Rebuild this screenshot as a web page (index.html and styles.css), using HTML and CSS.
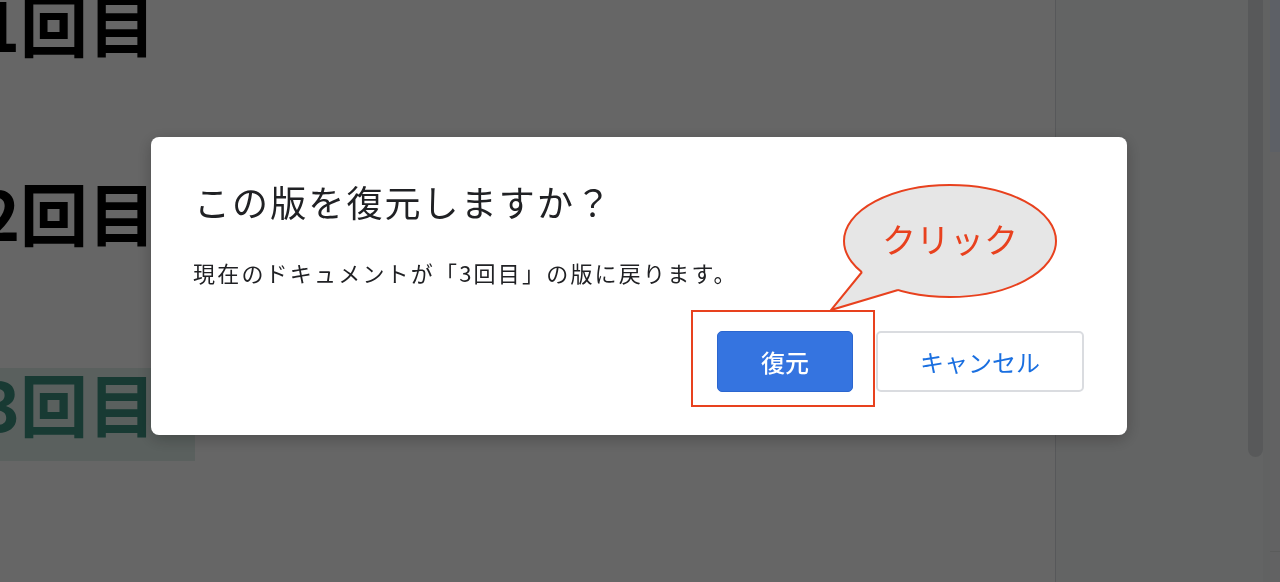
FILE: index.html
```html
<!DOCTYPE html>
<html lang="ja">
<head>
<meta charset="utf-8">
<title>版を復元</title>
<link rel="stylesheet" href="styles.css">
</head>
<body>
<div class="app">
  <main class="doc">
    <h1 class="heading first">1回目</h1>
    <h1 class="heading second">2回目</h1>
    <h1 class="heading third"><span class="hl">3回目</span></h1>
  </main>
  <aside class="side">
    <div class="panel"></div>
    <div class="scroll"><div class="thumb"></div></div>
    <div class="gutter"></div>
    <div class="strip"><div class="strip-top"></div><div class="strip-mid"></div><div class="strip-bot"></div></div>
  </aside>
</div>
<div class="backdrop">
  <div class="dialog">
    <h2 class="title">この版を復元しますか？</h2>
    <p class="body">現在のドキュメントが「3回目」の版に戻ります。</p>
    <div class="actions">
      <button class="btn primary">復元</button>
      <button class="btn secondary">キャンセル</button>
    </div>
    <div class="callout-box"></div>
    <svg class="bubble" width="245" height="135" viewBox="0 0 245 135">
      <ellipse cx="130" cy="61" rx="106" ry="56" fill="#e6e6e6" stroke="#e8411e" stroke-width="2"/>
      <polygon points="42,92 11,130 78,110 80,100 46,86" fill="#e6e6e6"/>
      <polyline points="42,92 11,130 78,110" fill="none" stroke="#e8411e" stroke-width="2" stroke-linejoin="miter"/>
      <text x="130" y="73" text-anchor="middle" class="bubble-text">クリック</text>
    </svg>
  </div>
</div>
</body>
</html>
```
FILE: styles.css
```css
html, body {
  margin: 0;
  padding: 0;
  width: 1280px;
  height: 582px;
  overflow: hidden;
  font-family: "Noto Sans CJK JP", "Noto Sans", sans-serif;
}

.app {
  display: flex;
  width: 1280px;
  height: 582px;
}

.doc {
  flex: 0 0 1055px;
  background: #ffffff;
  border-right: 1px solid #dadce0;
  display: flex;
  flex-direction: column;
  align-items: flex-start;
  overflow: hidden;
}

.heading {
  margin: 0 0 0 -20px;
  font-size: 68px;
  line-height: 68px;
  font-weight: 700;
  color: #000000;
  white-space: nowrap;
}

.heading.first { margin-top: -11px; }
.heading.second { margin-top: 121px; }
.heading.third { margin-top: 122px; }

.hl {
  display: inline-block;
  background: #e1f0eb;
  color: #3d9180;
  padding: 1px 39px 24px 0;
  line-height: 68px;
}

.side {
  flex: 1;
  display: flex;
  background: #f8f9fa;
}

.panel { flex: 1; }

.scroll {
  flex: 0 0 15px;
}

.thumb {
  height: 457px;
  background: #dcdfe1;
  border-radius: 0 0 8px 8px;
}

.gutter {
  flex: 0 0 7px;
  background: #f3f4f5;
}

.strip {
  flex: 0 0 10px;
  display: flex;
  flex-direction: column;
}

.strip-top {
  height: 152px;
  background: #e8f0fe;
}

.strip-mid {
  flex: 1;
  background: #f5f6f7;
}

.strip-bot {
  height: 30px;
  background: #f5f6f7;
  border-top: 1px solid #e3e5e7;
}

.backdrop {
  position: fixed;
  inset: 0;
  background: rgba(0, 0, 0, 0.6);
  display: flex;
  justify-content: center;
  align-items: flex-start;
  padding: 137px 2px 0 0;
  box-sizing: border-box;
}

.dialog {
  position: relative;
  width: 976px;
  height: 298px;
  box-sizing: border-box;
  background: #ffffff;
  border-radius: 8px;
  box-shadow: 0 4px 16px rgba(0, 0, 0, 0.25);
  padding: 40px 43px 43px 43px;
  display: flex;
  flex-direction: column;
}

.title {
  margin: 0;
  font-size: 36px;
  line-height: 48px;
  font-weight: 400;
  letter-spacing: 2.1px;
  color: #202124;
}

.body {
  margin: 33px 0 0 -1px;
  font-size: 22px;
  line-height: 28px;
  letter-spacing: 2.2px;
  color: #202124;
}

.actions {
  margin-top: auto;
  display: flex;
  justify-content: flex-end;
  gap: 23px;
}

.btn {
  height: 61px;
  box-sizing: border-box;
  border-radius: 5px;
  font-family: "Noto Sans CJK JP", "Noto Sans", sans-serif;
  font-size: 24px;
  font-weight: 500;
  padding: 0;
}

.primary {
  width: 136px;
  background: #3574e0;
  border: 1px solid #2b66cf;
  color: #ffffff;
}

.secondary {
  width: 208px;
  background: #ffffff;
  border: 2px solid #dadce0;
  color: #1a6fe0;
  font-weight: 400;
}

.callout-box {
  position: absolute;
  left: 540px;
  top: 173px;
  width: 184px;
  height: 97px;
  box-sizing: border-box;
  border: 2px solid #e8411e;
}

.bubble {
  position: absolute;
  left: 669px;
  top: 43px;
  overflow: visible;
}

.bubble-text {
  font-family: "Noto Sans CJK JP", sans-serif;
  font-size: 34px;
  fill: #e8411e;
}
```
